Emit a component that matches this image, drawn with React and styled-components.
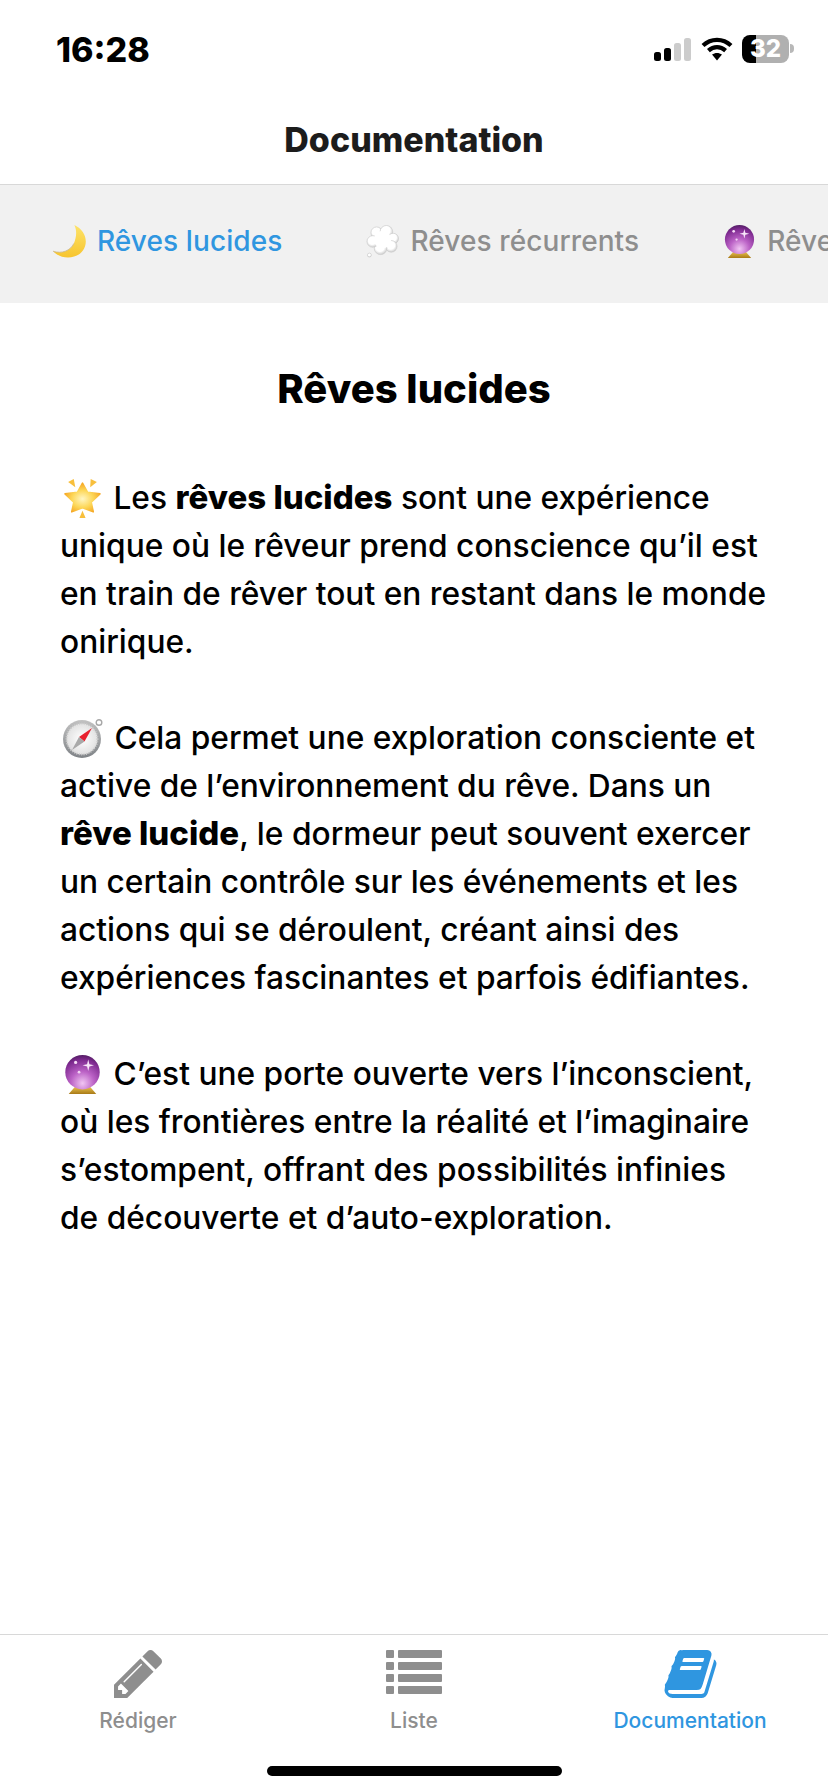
import React from 'react'
import styled, { createGlobalStyle } from 'styled-components'

const GlobalStyle = createGlobalStyle`
	html, body {
		margin: 0;
		padding: 0;
		background: #fff;
	}
	* {
		box-sizing: border-box;
	}
`

const BLUE = '#2f96e0'
const GREY = '#8e8e8e'

const SignalIcon = () => (
	<svg width='37' height='23' viewBox='0 0 37 23'>
		<rect x='0' y='14' width='7' height='9' rx='2.5' fill='#000' />
		<rect x='10' y='10' width='7' height='13' rx='2.5' fill='#000' />
		<rect x='20' y='5' width='7' height='18' rx='2.5' fill='#ccc' />
		<rect x='30' y='0' width='7' height='23' rx='2.5' fill='#ccc' />
	</svg>
)

const WifiIcon = () => (
	<svg width='32' height='24' viewBox='0 0 32 24'>
		<g fill='none' stroke='#000' strokeWidth='4.2'>
			<path d='M2 8.6 C10 1 22 1 30 8.6' />
			<path d='M7.4 13.6 C12.6 9 19.4 9 24.6 13.6' />
		</g>
		<path d='M11 17.6 C14 15.4 18 15.4 21 17.6 L16 23.6 Z' fill='#000' />
	</svg>
)

const MoonEmoji = ({ size, $inline }) => (
	<EmojiSvg size={size} $inline={$inline} viewBox='0 0 34 34'>
		<defs>
			<linearGradient id='moon' x1='0' y1='0' x2='0' y2='1'>
				<stop offset='0' stopColor='#fde36a' />
				<stop offset='1' stopColor='#f7c52f' />
			</linearGradient>
		</defs>
		<path d='M22 0 C33 5 37 17 31 26 C25 35 9 36.5 0 27 C9 30 18 26.5 21.5 19 C24 13 25 6 22 0 Z' fill='url(#moon)' />
		<path d='M0 27 C9 30 18 26.5 21.5 19' fill='none' stroke='#c9b48a' strokeWidth='0.8' />
	</EmojiSvg>
)

const CloudEmoji = ({ size, $inline }) => (
	<EmojiSvg size={size} $inline={$inline} viewBox='0 0 34 34'>
		<defs>
			<radialGradient id='cloud' cx='0.45' cy='0.4' r='0.7'>
				<stop offset='0.5' stopColor='#fff' />
				<stop offset='1' stopColor='#b8b8b8' />
			</radialGradient>
		</defs>
		<g fill='url(#cloud)' stroke='#c8c8c8' strokeWidth='0.6'>
			<circle cx='11' cy='8' r='6' />
			<circle cx='21' cy='7' r='6.5' />
			<circle cx='28' cy='14' r='5.5' />
			<circle cx='26' cy='22' r='6' />
			<circle cx='15' cy='24' r='6.5' />
			<circle cx='7' cy='17' r='6' />
			<circle cx='17' cy='15' r='9' stroke='none' fill='#fff' />
			<circle cx='3.5' cy='31' r='2' />
		</g>
	</EmojiSvg>
)

const BallEmoji = ({ size, $inline, id = 'ball' }) => (
	<EmojiSvg size={size} $inline={$inline} viewBox='0 0 34 34'>
		<defs>
			<radialGradient id={id} cx='0.5' cy='0.82' r='0.85'>
				<stop offset='0' stopColor='#f1c5f3' />
				<stop offset='0.4' stopColor='#bb62c6' />
				<stop offset='0.8' stopColor='#7e2a90' />
				<stop offset='1' stopColor='#4b1a5c' />
			</radialGradient>
			<linearGradient id={`${id}-base`} x1='0' y1='0' x2='0' y2='1'>
				<stop offset='0' stopColor='#f0cb55' />
				<stop offset='1' stopColor='#a97a17' />
			</linearGradient>
		</defs>
		<path d='M11 27 L23 27 L29 34 L5 34 Z' fill={`url(#${id}-base)`} />
		<circle cx='17' cy='15' r='15' fill={`url(#${id})`} />
		<circle cx='11' cy='6.5' r='1.4' fill='#f6dcf7' />
		<path d='M22 4 L23 8 L27 9 L23 10 L22 14 L21 10 L17 9 L21 8 Z' fill='#f8e6f9' />
		<circle cx='14' cy='15' r='1.2' fill='#f0d2f2' />
	</EmojiSvg>
)

const StarEmoji = ({ size, $inline }) => (
	<EmojiSvg size={size} $inline={$inline} viewBox='0 0 38 38'>
		<defs>
			<radialGradient id='star' cx='0.5' cy='0.55' r='0.55'>
				<stop offset='0' stopColor='#fff6c2' />
				<stop offset='0.55' stopColor='#fdd758' />
				<stop offset='1' stopColor='#f5a623' />
			</radialGradient>
		</defs>
		<path d='M19 4 L24 13 L36 14.5 L27.5 22.5 L29.5 32 L19 28 L8.5 32 L10.5 22.5 L2 14.5 L14 13 Z' fill='url(#star)' stroke='url(#star)' strokeWidth='1.5' strokeLinejoin='round' />
		<g fill='#f8bf3c'>
			<path d='M5 3 L10.5 0 L12 8 Z' />
			<path d='M27 0 L33 3 L26.5 8 Z' />
			<path d='M19 31 L22 38 L16 38 Z' />
		</g>
	</EmojiSvg>
)

const CompassEmoji = ({ size, $inline }) => (
	<EmojiSvg size={size} $inline={$inline} viewBox='0 0 40 40'>
		<defs>
			<radialGradient id='dial' cx='0.5' cy='0.5' r='0.5'>
				<stop offset='0' stopColor='#fff' />
				<stop offset='1' stopColor='#e2e2e2' />
			</radialGradient>
			<linearGradient id='rim' x1='0' y1='0' x2='0' y2='1'>
				<stop offset='0' stopColor='#c2c2c2' />
				<stop offset='1' stopColor='#7f8387' />
			</linearGradient>
		</defs>
		<circle cx='36' cy='4.5' r='2.8' fill='#fff' stroke='#a8a8a8' strokeWidth='1.4' />
		<circle cx='19' cy='21' r='19' fill='url(#rim)' />
		<circle cx='19' cy='21' r='15.5' fill='url(#dial)' stroke='#c9c9c9' strokeWidth='2' strokeDasharray='1 1.4' />
		<path d='M29 10 L21.5 23.5 L16 19 Z' fill='#e8212e' />
		<path d='M9 32 L16 19 L21.5 23.5 Z' fill='#a9a9a9' />
	</EmojiSvg>
)

const PencilIcon = () => (
	<svg width='48' height='48' viewBox='128 149 1515 1515' fill={GREY}>
		<path d='M491 1536l91-91-235-235-91 91v107h128v128h107zm523-928q0-22-22-22-10 0-17 7l-542 542q-7 7-7 17 0 22 22 22 10 0 17-7l542-542q7-7 7-17zm-54-192l416 416-832 832h-416v-416zm683 96q0 53-37 90l-166 166-416-416 166-165q36-38 90-38 53 0 91 38l235 234q37 39 37 91z' />
	</svg>
)

const ListIcon = () => (
	<svg width='56' height='48' viewBox='0 0 56 48' fill={GREY}>
		{[0, 12, 24, 36].map(y => (
			<React.Fragment key={y}>
				<rect x='0' y={y} width='8' height='8' rx='1' />
				<rect x='12' y={y} width='44' height='8' rx='1' />
			</React.Fragment>
		))}
	</svg>
)

const BookIcon = () => (
	<svg width='53' height='48' viewBox='0 128 1664 1536' fill={BLUE}>
		<path d='M1639 478q40 57 18 129l-275 906q-19 64-76.5 107.5t-122.5 43.5h-923q-77 0-148.5-53.5t-99.5-131.5q-24-67-2-127 0-4 3-27t4-37q1-8-3-21.5t-3-19.5q2-11 8-21t16.5-23.5 16.5-23.5q23-38 45-91.5t30-91.5q3-10 .5-30t-.5-28q3-11 17-28t17-23q21-36 42-92t25-90q1-9-2.5-32t.5-28q4-13 22-30.5t22-22.5q19-26 42.5-84.5t27.5-96.5q1-8-3-25.5t-2-26.5q2-8 9-18t18-23 17-21q8-12 16.5-30.5t15-35 16-36 19.5-32 26.5-23.5 36-11.5 47.5 5.5l-1 3q38-9 51-9h761q74 0 114 56t18 130l-274 906q-36 119-71.5 153.5t-128.5 34.5h-869q-27 0-38 15-11 16-1 43 24 70 144 70h923q29 0 56-15.5t35-41.5l300-987q7-22 5-57 38 15 59 43zm-1064 2q-4 13 2 22.5t20 9.5h608q13 0 25.5-9.5t16.5-22.5l21-64q4-13-2-22.5t-20-9.5h-608q-13 0-25.5 9.5t-16.5 22.5zm-83 256q-4 13 2 22.5t20 9.5h608q13 0 25.5-9.5t16.5-22.5l21-64q4-13-2-22.5t-20-9.5h-608q-13 0-25.5 9.5t-16.5 22.5z' />
	</svg>
)

const App = () => (
	<Page>
		<GlobalStyle />
		<StatusBar>
			<Clock>16:28</Clock>
			<StatusIcons>
				<SignalIcon />
				<WifiIcon />
				<Battery>
					<BatteryLevel>32</BatteryLevel>
					<BatteryNub />
				</Battery>
			</StatusIcons>
		</StatusBar>
		<Header>Documentation</Header>
		<TopTabs>
			<TopTab $active>
				<MoonEmoji size={33} />
				Rêves lucides
			</TopTab>
			<TopTab>
				<CloudEmoji size={33} />
				Rêves récurrents
			</TopTab>
			<TopTab>
				<BallEmoji size={33} id='tab-ball' />
				Rêves prémonitoires
			</TopTab>
		</TopTabs>
		<Content>
			<Title>Rêves lucides</Title>
			<Paragraph>
				<StarEmoji size={39} $inline /> Les <strong>rêves lucides</strong> sont
				une expérience unique où le rêveur prend conscience qu’il est en train
				de rêver tout en restant dans le monde onirique.
			</Paragraph>
			<Paragraph>
				<CompassEmoji size={40} $inline /> Cela permet une exploration
				consciente et active de l’environnement du rêve. Dans un{' '}
				<strong>rêve lucide</strong>, le dormeur peut souvent exercer un certain
				contrôle sur les événements et les actions qui se déroulent, créant
				ainsi des expériences fascinantes et parfois édifiantes.
			</Paragraph>
			<Paragraph>
				<BallEmoji size={39} $inline id='text-ball' /> C’est une porte ouverte
				vers l’inconscient, où les frontières entre la réalité et l’imaginaire
				s’estompent, offrant des possibilités infinies de découverte et
				d’auto-exploration.
			</Paragraph>
		</Content>
		<BottomTabs>
			<BottomTab>
				<TabIcon>
					<PencilIcon />
				</TabIcon>
				Rédiger
			</BottomTab>
			<BottomTab>
				<TabIcon>
					<ListIcon />
				</TabIcon>
				Liste
			</BottomTab>
			<BottomTab $active>
				<TabIcon>
					<BookIcon />
				</TabIcon>
				Documentation
			</BottomTab>
		</BottomTabs>
		<HomeArea>
			<HomeIndicator />
		</HomeArea>
	</Page>
)

export default App

const Page = styled.div`
	width: 828px;
	height: 1792px;
	display: flex;
	flex-direction: column;
	overflow: hidden;
	background: #fff;
	color: #000;
	font-family: Inter, 'Liberation Sans', sans-serif;
`
const StatusBar = styled.div`
	height: 100px;
	flex: none;
	display: flex;
	justify-content: space-between;
	align-items: flex-start;
	padding: 30px 39px 0 56px;
`
const Clock = styled.div`
	font-size: 34px;
	line-height: 39px;
	font-weight: 800;
`
const StatusIcons = styled.div`
	display: flex;
	align-items: flex-end;
	gap: 10px;
	padding-top: 5px;
`
const Battery = styled.div`
	position: relative;
	width: 47px;
	height: 28px;
	margin: 0 0 -2px -1px;
	border-radius: 8px;
	background: linear-gradient(to right, #000 0 29%, #b0b0b0 29% 100%);
	display: flex;
	align-items: center;
	justify-content: center;
`
const BatteryLevel = styled.span`
	color: #fff;
	font-size: 24px;
	line-height: 28px;
	font-weight: 800;
`
const BatteryNub = styled.span`
	position: absolute;
	right: -5px;
	top: 9px;
	width: 4px;
	height: 9px;
	border-radius: 0 4px 4px 0;
	background: #b8b8b8;
`
const Header = styled.div`
	height: 85px;
	flex: none;
	border-bottom: 1px solid #d8d8d8;
	display: flex;
	justify-content: center;
	padding-top: 19px;
	font-size: 34px;
	line-height: 41px;
	font-weight: 800;
	color: #1c1c1c;
`
const TopTabs = styled.div`
	height: 118px;
	flex: none;
	display: flex;
	gap: 84px;
	padding: 38px 0 0 53px;
	background: #f1f1f1;
	overflow: hidden;
`
const TopTab = styled.div`
	flex: none;
	height: 36px;
	display: flex;
	align-items: center;
	gap: 11px;
	font-size: 28px;
	line-height: 36px;
	font-weight: 500;
	letter-spacing: 0.1px;
	white-space: nowrap;
	color: ${({ $active }) => ($active ? BLUE : GREY)};
`
const EmojiSvg = styled.svg.attrs(({ size }) => ({ width: size, height: size }))`
	flex: none;
	vertical-align: -9px;
	margin: ${({ $inline }) => ($inline ? '0 3px 0 3px' : '0')};
`
const Content = styled.div`
	flex: 1;
	padding: 63px 60px 0 60px;
`
const Title = styled.h1`
	margin: 0 0 63px;
	text-align: center;
	font-size: 40px;
	line-height: 45px;
	font-weight: 800;
`
const Paragraph = styled.p`
	margin: 0 0 48px;
	font-size: 31.7px;
	line-height: 48px;
	font-weight: 500;
	strong {
		font-size: 33px;
		line-height: 1;
		font-weight: 800;
	}
`
const BottomTabs = styled.div`
	height: 110px;
	flex: none;
	display: grid;
	grid-template-columns: repeat(3, 1fr);
	border-top: 1px solid #d8d8d8;
	padding-top: 15px;
`
const BottomTab = styled.div`
	display: flex;
	flex-direction: column;
	align-items: center;
	font-size: 21px;
	line-height: 25px;
	font-weight: 500;
	color: ${({ $active }) => ($active ? BLUE : GREY)};
`
const TabIcon = styled.div`
	height: 48px;
	margin-bottom: 10px;
`
const HomeArea = styled.div`
	height: 48px;
	flex: none;
	display: flex;
	justify-content: center;
	padding-top: 22px;
`
const HomeIndicator = styled.div`
	width: 295px;
	height: 10px;
	border-radius: 5px;
	background: #000;
`
